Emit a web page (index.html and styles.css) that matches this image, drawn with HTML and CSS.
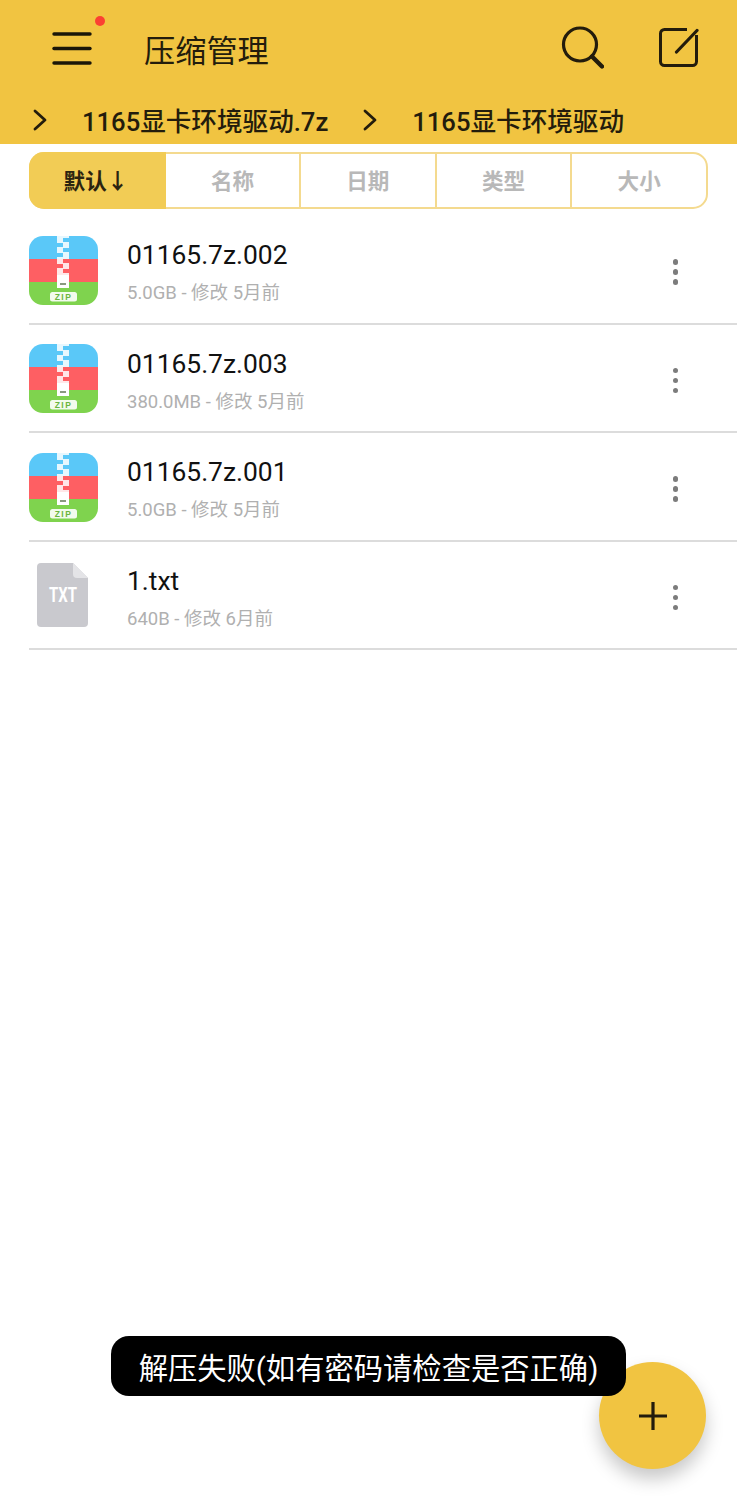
FILE: index.html
```html
<!DOCTYPE html>
<html lang="zh-CN">
<head>
    <meta charset="UTF-8">
    <title>压缩管理</title>
    <link rel="stylesheet" href="styles.css">
</head>
<body>
    <svg width="0" height="0" class="defs">
        <defs>
            <clipPath id="zipClip"><rect width="69" height="69" rx="14"/></clipPath>
            <g id="zipIcon">
                <g clip-path="url(#zipClip)">
                    <rect width="69" height="23" fill="#5AC8F8"/>
                    <rect y="23" width="69" height="23" fill="#FE5F63"/>
                    <rect y="46" width="69" height="23" fill="#7FD34E"/>
                    <!-- Zipper -->
                    <rect x="28" width="12" height="40" fill="#fff" fill-opacity="0.85"/>
                    <rect x="28" y="39" width="12" height="13" fill="#fff"/>
                    <rect x="31" y="47" width="6" height="2" fill="#8a9a80"/>
                    <rect x="34" y="2" width="6" height="4" fill="#5AC8F8"/>
                    <rect x="28" y="7" width="6" height="4" fill="#5AC8F8"/>
                    <rect x="34" y="12" width="6" height="4" fill="#5AC8F8"/>
                    <rect x="28" y="17" width="6" height="4" fill="#5AC8F8"/>
                    <rect x="34" y="23" width="6" height="4" fill="#FE5F63"/>
                    <rect x="28" y="28" width="6" height="4" fill="#FE5F63"/>
                    <rect x="34" y="33" width="6" height="4" fill="#FE5F63"/>
                    <!-- Label -->
                    <rect x="21" y="56" width="27" height="9.5" rx="2.5" fill="#fff" fill-opacity="0.9"/>
                    <text x="34.5" y="64" text-anchor="middle" class="zip-label">ZIP</text>
                </g>
            </g>
        </defs>
    </svg>

    <div class="app">
        <header class="top-bar">
            <div class="title-row">
                <button class="menu-btn" aria-label="menu">
                    <svg width="40" height="34" viewBox="0 0 40 34">
                        <g stroke="#1b1608" stroke-width="3.4" stroke-linecap="round">
                            <line x1="2" y1="3" x2="38" y2="3"/>
                            <line x1="2" y1="17.5" x2="38" y2="17.5"/>
                            <line x1="2" y1="32" x2="38" y2="32"/>
                        </g>
                    </svg>
                    <span class="red-dot"></span>
                </button>
                <h1 class="title">压缩管理</h1>
                <svg class="search-icon" width="44" height="44" viewBox="0 0 44 44" fill="none" stroke="#231c0c">
                    <circle cx="20" cy="18.5" r="16.5" stroke-width="3.2"/>
                    <line x1="32" y1="30.5" x2="42" y2="40.5" stroke-width="4.4" stroke-linecap="round"/>
                </svg>
                <svg class="edit-icon" width="42" height="42" viewBox="0 0 42 42" fill="none" stroke="#231c0c">
                    <path d="M30 2.5H7.5a4 4 0 0 0-4 4v28a4 4 0 0 0 4 4h28a4 4 0 0 0 4-4V8" stroke-width="3"/>
                    <path d="M19.5 25 40 3.5" stroke-width="3.2" stroke-linecap="round"/>
                </svg>
            </div>
            <nav class="crumbs">
                <svg class="chevron" width="14" height="22" viewBox="0 0 14 22" fill="none" stroke="#231c0c" stroke-width="2.8" stroke-linecap="round" stroke-linejoin="round"><path d="M2 2 12 11 2 20"/></svg>
                <span class="crumb crumb-first">1165显卡环境驱动.7z</span>
                <svg class="chevron" width="14" height="22" viewBox="0 0 14 22" fill="none" stroke="#231c0c" stroke-width="2.8" stroke-linecap="round" stroke-linejoin="round"><path d="M2 2 12 11 2 20"/></svg>
                <span class="crumb">1165显卡环境驱动</span>
            </nav>
        </header>

        <div class="sort-tabs">
            <div class="sort-tab active">默认↓</div>
            <div class="sort-tab">名称</div>
            <div class="sort-tab">日期</div>
            <div class="sort-tab">类型</div>
            <div class="sort-tab">大小</div>
        </div>

        <ul class="file-list">
            <li class="file-row">
                <svg class="file-icon" width="69" height="69" viewBox="0 0 69 69"><use href="#zipIcon"/></svg>
                <div class="file-info">
                    <div class="file-name">01165.7z.002</div>
                    <div class="file-meta">5.0GB - 修改 5月前</div>
                </div>
                <span class="more"><i></i><i></i><i></i></span>
            </li>
            <li class="file-row">
                <svg class="file-icon" width="69" height="69" viewBox="0 0 69 69"><use href="#zipIcon"/></svg>
                <div class="file-info">
                    <div class="file-name">01165.7z.003</div>
                    <div class="file-meta">380.0MB - 修改 5月前</div>
                </div>
                <span class="more"><i></i><i></i><i></i></span>
            </li>
            <li class="file-row">
                <svg class="file-icon" width="69" height="69" viewBox="0 0 69 69"><use href="#zipIcon"/></svg>
                <div class="file-info">
                    <div class="file-name">01165.7z.001</div>
                    <div class="file-meta">5.0GB - 修改 5月前</div>
                </div>
                <span class="more"><i></i><i></i><i></i></span>
            </li>
            <li class="file-row">
                <svg class="file-icon" width="69" height="69" viewBox="0 0 69 69">
                    <path d="M12 2H44L59 17V62a4 4 0 0 1-4 4H12a4 4 0 0 1-4-4V6a4 4 0 0 1 4-4Z" fill="#C9C9CE"/>
                    <path d="M44 2 59 17H48a4 4 0 0 1-4-4Z" fill="#E4E4E7"/>
                    <text x="34" y="41" text-anchor="middle" textLength="28" lengthAdjust="spacingAndGlyphs" class="txt-label">TXT</text>
                </svg>
                <div class="file-info">
                    <div class="file-name">1.txt</div>
                    <div class="file-meta">640B - 修改 6月前</div>
                </div>
                <span class="more"><i></i><i></i><i></i></span>
            </li>
        </ul>

        <div class="toast">解压失败(如有密码请检查是否正确)</div>
        <button class="fab" aria-label="add">
            <svg width="28" height="28" viewBox="0 0 28 28" stroke="#231c0c" stroke-width="3.2"><path d="M14 0V28M0 14H28"/></svg>
        </button>
    </div>
</body>
</html>
```

FILE: styles.css
```css
* {
    box-sizing: border-box;
}
body {
    margin: 0;
    background-color: #fff;
    font-family: Roboto, "Noto Sans CJK SC", sans-serif;
}
.defs {
    position: absolute;
}
.app {
    position: relative;
    height: 1500px;
    overflow: hidden;
    background-color: #fff;
}
.top-bar {
    height: 144px;
    background-color: #F1C441;
    color: #231c0c;
}
.title-row {
    display: flex;
    align-items: center;
    height: 100px;
    padding-left: 52px;
}
.menu-btn {
    position: relative;
    display: flex;
    width: 40px;
    height: 34px;
    margin-top: -4px;
    padding: 0;
    border: 0;
    background: none;
}
.red-dot {
    position: absolute;
    top: -15px;
    right: -13px;
    width: 10px;
    height: 10px;
    border-radius: 50%;
    background-color: #FB4032;
}
.title {
    margin: 3px 0 0 52px;
    flex: 1;
    font-size: 31.2px;
    font-weight: 400;
    line-height: 40px;
}
.search-icon {
    margin-right: 53px;
    margin-top: -4px;
}
.edit-icon {
    margin-right: 38px;
    margin-top: -4px;
}
.crumbs {
    display: flex;
    align-items: center;
    height: 44px;
    padding-left: 33px;
}
.chevron {
    margin-top: -4px;
}
.crumb {
    margin-left: 35px;
    font-size: 25.6px;
    font-weight: 500;
    line-height: 44px;
    white-space: nowrap;
}
.crumb-first {
    margin-right: 35px;
}
.sort-tabs {
    display: flex;
    height: 57px;
    margin: 8px 29px 0;
    border: 2px solid #F4DA8F;
    border-radius: 15px;
}
.sort-tab {
    display: flex;
    align-items: center;
    justify-content: center;
    flex: 1;
    padding-bottom: 3px;
    border-left: 2px solid #F4DA8F;
    color: #b8b8b8;
    font-size: 21.6px;
    font-weight: 700;
}
.sort-tab.active {
    flex: 0 0 137px;
    margin: -2px 0 -2px -2px;
    padding-right: 3px;
    border-left: 0;
    border-radius: 15px 0 0 15px;
    background-color: #F2CC55;
    color: #2b2410;
}
.active + .sort-tab {
    flex: 0 0 133px;
    border-left: 0;
}
.file-list {
    margin: 7px 0 0;
    padding: 0 0 0 29px;
    list-style: none;
}
.file-row {
    display: flex;
    align-items: center;
    height: 108.5px;
    border-bottom: 2px solid #dcdcdc;
}
.file-icon {
    flex: none;
    margin-top: 2px;
}
.zip-label {
    font-family: "Liberation Sans", sans-serif;
    font-size: 8.5px;
    font-weight: 700;
    letter-spacing: 1.4px;
    fill: #6bb53f;
}
.txt-label {
    font-family: Roboto, sans-serif;
    font-size: 21px;
    font-weight: 700;
    fill: #fff;
}
.file-info {
    flex: 1;
    align-self: flex-start;
    margin-left: 29px;
    padding-top: 21px;
}
.file-name {
    color: #111;
    font-size: 26.4px;
    line-height: 36px;
}
.file-meta {
    margin-top: 7px;
    color: #b0b0b0;
    font-size: 18.5px;
    line-height: 26px;
}
.more {
    display: flex;
    flex-direction: column;
    gap: 4.5px;
    margin-top: 5px;
    margin-right: 59px;
}
.more i {
    width: 5.5px;
    height: 5.5px;
    border-radius: 50%;
    background-color: #7c7c7c;
}
.toast {
    position: absolute;
    left: 111px;
    top: 1336px;
    z-index: 2;
    width: 515px;
    height: 60px;
    padding-top: 3px;
    border-radius: 18px;
    background-color: #000;
    color: #fff;
    font-size: 29.3px;
    line-height: 60px;
    text-align: center;
    white-space: nowrap;
}
.fab {
    position: absolute;
    left: 599px;
    top: 1362px;
    display: flex;
    align-items: center;
    justify-content: center;
    width: 107px;
    height: 107px;
    padding: 0;
    border: 0;
    border-radius: 50%;
    background-color: #F1C441;
    box-shadow: 0 10px 18px rgba(0, 0, 0, 0.22);
}
```
